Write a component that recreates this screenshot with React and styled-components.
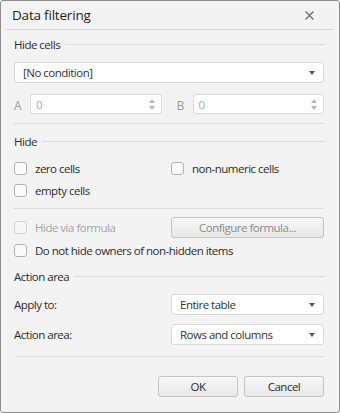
import React from "react";
import styled, { createGlobalStyle } from "styled-components";

const Global = createGlobalStyle`
  html, body { margin: 0; padding: 0; background: #ffffff; }
  body { font-family: "Open Sans", "Noto Sans", sans-serif; }
  * { box-sizing: border-box; }
`;

const Dialog = styled.div`
  width: 340px;
  height: 413px;
  background: #f3f3f3;
  border: 1px solid #8e8e8e;
  border-radius: 3px;
  display: flex;
  flex-direction: column;
  color: #2b2b2b;
  font-size: 11.5px;
  letter-spacing: -0.5px;
`;

const TitleBar = styled.div`
  height: 29px;
  margin: 0 5px;
  border-bottom: 1px solid #d6d6d6;
  display: flex;
  align-items: center;
  justify-content: space-between;
  padding: 0 20px 0 6px;
`;

const Title = styled.div`
  font-size: 13.5px;
  letter-spacing: -0.2px;
  color: #1e1e1e;
  margin-top: -1px;
`;

const Close = styled.svg`
  width: 9px;
  height: 9px;
  margin-top: 1px;
`;

const Body = styled.div`
  padding: 0 15px 0 13px;
  display: flex;
  flex-direction: column;
`;

const SectionHeader = styled.div`
  display: flex;
  align-items: center;
  height: 16px;
  margin-top: ${(p) => p.$mt || 0}px;
  gap: 5px;
  &::after {
    content: "";
    flex: 1;
    height: 1px;
    background: #dcdcdc;
    margin-right: -1px;
  }
`;

const Separator = styled.div`
  height: 1px;
  background: #dcdcdc;
  margin-top: ${(p) => p.$mt || 0}px;
  margin-left: ${(p) => p.$ml || 0}px;
`;

const SelectBox = styled.div`
  height: 21px;
  width: ${(p) => (p.$w ? `${p.$w}px` : "auto")};
  background: #ffffff;
  border: 1px solid #d9d9d9;
  border-radius: 3px;
  display: flex;
  align-items: center;
  justify-content: space-between;
  padding: 0 8px 0 8px;
  color: #333;
`;

const Caret = styled.span`
  width: 0;
  height: 0;
  border-left: 3.5px solid transparent;
  border-right: 3.5px solid transparent;
  border-top: 4px solid #555;
`;

const Row = styled.div`
  display: flex;
  align-items: center;
  height: ${(p) => p.$h || 20}px;
  margin-top: ${(p) => p.$mt || 0}px;
`;

const Pair = styled.div`
  display: flex;
  align-items: center;
  flex: 1;
`;

const SpinLabel = styled.span`
  width: 16px;
  color: #9a9a9a;
  font-size: 12px;
  margin-top: 2px;
`;

const SpinBox = styled.div`
  flex: 1;
  height: 20px;
  background: #fff;
  border: 1px solid #dadada;
  border-radius: 3px;
  display: flex;
  align-items: center;
  justify-content: space-between;
  padding: 0 6px 0 5px;
  color: #a8a8a8;
`;

const Spin = styled.span`
  display: flex;
  flex-direction: column;
  gap: 3px;
`;

const Tri = styled.span`
  width: 0;
  height: 0;
  border-left: 3.5px solid transparent;
  border-right: 3.5px solid transparent;
  ${(p) =>
    p.$up ? "border-bottom: 4px solid #b5b5b5;" : "border-top: 4px solid #b5b5b5;"}
`;

const CheckItem = styled.label`
  display: flex;
  align-items: center;
  gap: 8px;
  width: ${(p) => (p.$w ? `${p.$w}px` : "auto")};
  color: ${(p) => (p.$disabled ? "#a3a3a3" : "#2b2b2b")};
`;

const Box = styled.span`
  width: 13px;
  height: 13px;
  border: 1px solid ${(p) => (p.$disabled ? "#d3d3d3" : "#b3b3b3")};
  border-radius: 3px;
  background: ${(p) => (p.$disabled ? "#f6f6f6" : "#fafafa")};
  flex-shrink: 0;
`;

const Button = styled.div`
  width: ${(p) => p.$w}px;
  height: 21px;
  border: 1px solid #c4c4c4;
  border-radius: 3px;
  background: linear-gradient(#f7f7f7, #e8e8e8);
  display: flex;
  align-items: center;
  justify-content: center;
  color: ${(p) => (p.$disabled ? "#8a8a8a" : "#2b2b2b")};
`;

const FieldLabel = styled.span`
  width: 157px;
  color: #2b2b2b;
`;

const Footer = styled.div`
  display: flex;
  justify-content: flex-end;
  gap: 6px;
  margin-top: 19px;
`;

function Check({ label, w, disabled }) {
  return (
    <CheckItem $w={w} $disabled={disabled}>
      <Box $disabled={disabled} />
      {label}
    </CheckItem>
  );
}

function Spinner({ label }) {
  return (
    <Pair>
      <SpinLabel>{label}</SpinLabel>
      <SpinBox>
        0
        <Spin>
          <Tri $up />
          <Tri />
        </Spin>
      </SpinBox>
    </Pair>
  );
}

export default function App() {
  return (
    <>
      <Global />
      <Dialog>
        <TitleBar>
          <Title>Data filtering</Title>
          <Close viewBox="0 0 9 9">
            <path d="M0.5 0.5 L8.5 8.5 M8.5 0.5 L0.5 8.5" stroke="#666" strokeWidth="1.2" />
          </Close>
        </TitleBar>
        <Body>
          <SectionHeader $mt={6}>Hide cells</SectionHeader>
          <SelectBox style={{ marginTop: 10 }}>
            [No condition]
            <Caret />
          </SelectBox>
          <Row $mt={11} style={{ gap: 15 }}>
            <Spinner label="A" />
            <Spinner label="B" />
          </Row>
          <Separator $mt={9} />
          <SectionHeader $mt={9}>Hide</SectionHeader>
          <Row $mt={9}>
            <Check label="zero cells" w={157} />
            <Check label="non-numeric cells" />
          </Row>
          <Row $mt={2}>
            <Check label="empty cells" />
          </Row>
          <Separator $mt={8} />
          <Row $mt={8}>
            <Check label="Hide via formula" w={157} disabled />
            <Button $w={153} $disabled>
              Configure formula...
            </Button>
          </Row>
          <Row $mt={3}>
            <Check label="Do not hide owners of non-hidden items" />
          </Row>
          <SectionHeader $mt={8}>Action area</SectionHeader>
          <Row $h={21} $mt={10}>
            <FieldLabel>Apply to:</FieldLabel>
            <SelectBox $w={153}>
              Entire table
              <Caret />
            </SelectBox>
          </Row>
          <Row $h={21} $mt={9}>
            <FieldLabel>Action area:</FieldLabel>
            <SelectBox $w={153}>
              Rows and columns
              <Caret />
            </SelectBox>
          </Row>
          <Separator $mt={11} $ml={2} />
          <Footer>
            <Button $w={80}>OK</Button>
            <Button $w={80}>Cancel</Button>
          </Footer>
        </Body>
      </Dialog>
    </>
  );
}
